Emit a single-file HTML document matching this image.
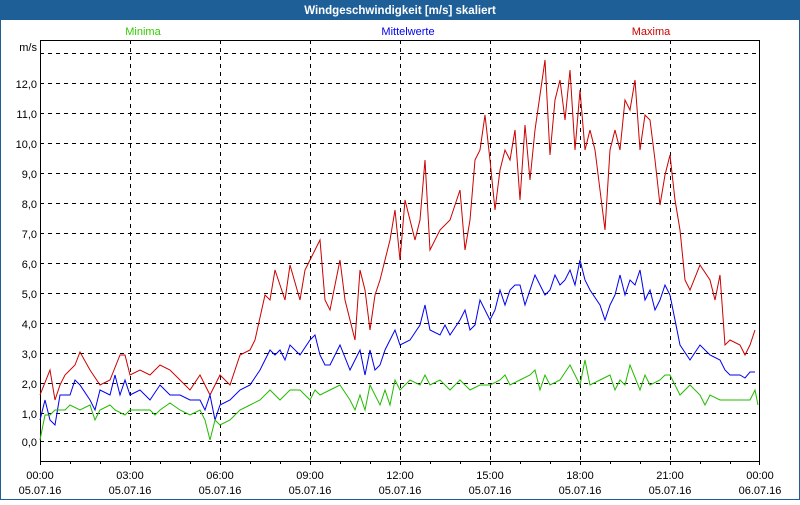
<!DOCTYPE html>
<html><head><meta charset="utf-8"><style>
body{margin:0;width:800px;height:500px;overflow:hidden;font-family:"Liberation Sans",sans-serif;background:#fff}
</style></head><body>
<svg width="800" height="500" xmlns="http://www.w3.org/2000/svg" font-family="Liberation Sans, sans-serif" font-size="11">
<rect x="0" y="0" width="800" height="500" fill="#1e5f98"/>
<rect x="1" y="20" width="798" height="479" fill="#fff"/>
<text x="400" y="14" fill="#fff" font-weight="bold" text-anchor="middle" font-size="11.5">Windgeschwindigkeit [m/s] skaliert</text>
<text x="143" y="35" fill="#33cc00" text-anchor="middle">Minima</text>
<text x="408" y="35" fill="#0000ee" text-anchor="middle">Mittelwerte</text>
<text x="651" y="35" fill="#cc0000" text-anchor="middle">Maxima</text>
<g stroke="#000" stroke-dasharray="4,4" stroke-width="1">
<path d="M40 53.5H760M40 83.5H760M40 113.5H760M40 143.5H760M40 173.5H760M40 203.5H760M40 233.5H760M40 263.5H760M40 293.5H760M40 323.5H760M40 353.5H760M40 383.5H760M40 413.5H760M40 441.5H760"/>
<path d="M130.5 40V461M220.5 40V461M310.5 40V461M400.5 40V461M490.5 40V461M580.5 40V461M670.5 40V461"/>
</g>
<rect x="40.5" y="40.5" width="719" height="421" fill="none" stroke="#000"/>
<path stroke="#000" d="M40.5 461v4M70.5 461v3M100.5 461v3M130.5 461v4M160.5 461v3M190.5 461v3M220.5 461v4M250.5 461v3M280.5 461v3M310.5 461v4M340.5 461v3M370.5 461v3M400.5 461v4M430.5 461v3M460.5 461v3M490.5 461v4M520.5 461v3M550.5 461v3M580.5 461v4M610.5 461v3M640.5 461v3M670.5 461v4M700.5 461v3M730.5 461v3M759.5 461v4"/>
<g text-anchor="end" fill="#000">
<text x="37" y="51">m/s</text>
<text x="37" y="88">12,0</text><text x="37" y="118">11,0</text><text x="37" y="148">10,0</text>
<text x="37" y="178">9,0</text><text x="37" y="208">8,0</text><text x="37" y="238">7,0</text>
<text x="37" y="268">6,0</text><text x="37" y="298">5,0</text><text x="37" y="328">4,0</text>
<text x="37" y="358">3,0</text><text x="37" y="388">2,0</text><text x="37" y="418">1,0</text><text x="37" y="446">0,0</text>
</g>
<g text-anchor="middle" fill="#000">
<text x="40" y="479">00:00</text><text x="40" y="494">05.07.16</text>
<text x="130" y="479">03:00</text><text x="130" y="494">05.07.16</text>
<text x="220" y="479">06:00</text><text x="220" y="494">05.07.16</text>
<text x="310" y="479">09:00</text><text x="310" y="494">05.07.16</text>
<text x="400" y="479">12:00</text><text x="400" y="494">05.07.16</text>
<text x="490" y="479">15:00</text><text x="490" y="494">05.07.16</text>
<text x="580" y="479">18:00</text><text x="580" y="494">05.07.16</text>
<text x="670" y="479">21:00</text><text x="670" y="494">05.07.16</text>
<text x="760" y="479">00:00</text><text x="760" y="494">06.07.16</text>
</g>
<g fill="none" stroke-width="1">
<polyline stroke="#cc0000" points="40,395 50,370 55,400 60,385 65,375 75,365 80,352 90,370 100,385 110,380 120,355 125,355 130,375 140,370 150,375 160,365 170,370 180,380 190,390 200,375 210,395 220,375 230,385 240,355 250,350 255,340 265,295 270,300 275,270 285,300 290,265 300,300 305,270 310,260 320,240 325,300 330,310 340,260 345,300 355,340 360,270 365,290 370,330 375,295 380,280 390,240 395,210 400,260 405,200 410,220 415,240 420,220 425,160 430,250 440,230 450,220 460,190 465,250 470,220 475,160 480,150 485,115 490,160 495,210 500,170 505,150 510,160 515,130 520,200 525,125 530,180 535,130 540,95 545,60 550,155 555,100 560,80 565,120 570,70 575,150 580,90 585,150 590,130 595,150 600,190 605,230 610,150 615,130 620,150 625,100 630,110 635,80 640,150 645,115 650,120 655,160 660,205 665,175 670,155 675,200 680,230 685,280 690,290 700,265 710,280 715,300 720,275 725,345 730,340 740,345 745,355 750,345 755,330"/>
<polyline stroke="#0000ee" points="40,420 45,400 50,420 55,425 60,395 70,395 75,380 80,385 90,400 95,410 100,390 110,395 115,375 120,395 125,380 130,395 140,390 150,400 160,385 170,395 180,395 190,400 200,400 205,410 210,395 215,420 220,405 230,400 240,390 250,385 260,370 265,360 270,350 275,355 280,350 285,360 290,345 300,355 310,340 315,335 320,355 325,365 330,365 340,345 350,370 355,360 360,350 365,375 370,350 375,370 380,365 385,350 390,340 395,330 400,345 410,340 420,325 425,305 430,330 440,335 445,325 450,335 460,320 465,310 470,330 475,325 480,300 490,320 495,310 500,290 505,305 510,290 515,285 520,285 525,305 530,290 535,275 540,285 545,295 550,290 555,275 560,285 565,280 570,270 575,285 580,260 585,280 590,290 600,305 605,320 610,305 615,295 620,275 625,295 630,280 635,285 640,270 645,300 650,290 655,310 660,300 665,285 670,295 675,320 680,345 690,360 700,345 710,355 720,360 725,370 730,375 740,375 745,378 750,372 755,372"/>
<polyline stroke="#22bb00" points="40,440 45,415 50,415 55,410 65,410 70,405 80,410 90,405 95,420 100,410 110,405 115,410 125,415 130,410 140,410 150,410 155,415 160,410 170,403 180,410 190,415 200,410 205,420 210,440 215,420 220,425 230,420 240,410 250,405 260,400 270,390 280,400 290,390 300,390 310,400 315,390 320,395 330,390 340,385 350,400 355,410 360,395 365,410 370,385 380,405 385,390 390,405 395,380 400,390 410,380 420,385 425,375 430,385 440,380 450,390 460,380 470,390 480,385 490,385 500,380 505,375 510,385 520,380 530,375 535,370 540,390 545,375 550,385 560,380 570,365 575,375 580,385 585,360 590,385 600,380 610,375 615,390 620,380 625,385 630,365 640,390 645,375 650,385 660,380 665,375 670,375 680,395 690,385 700,395 705,405 710,395 720,400 740,400 750,400 755,390 758,405"/>
</g>
</svg>
</body></html>
